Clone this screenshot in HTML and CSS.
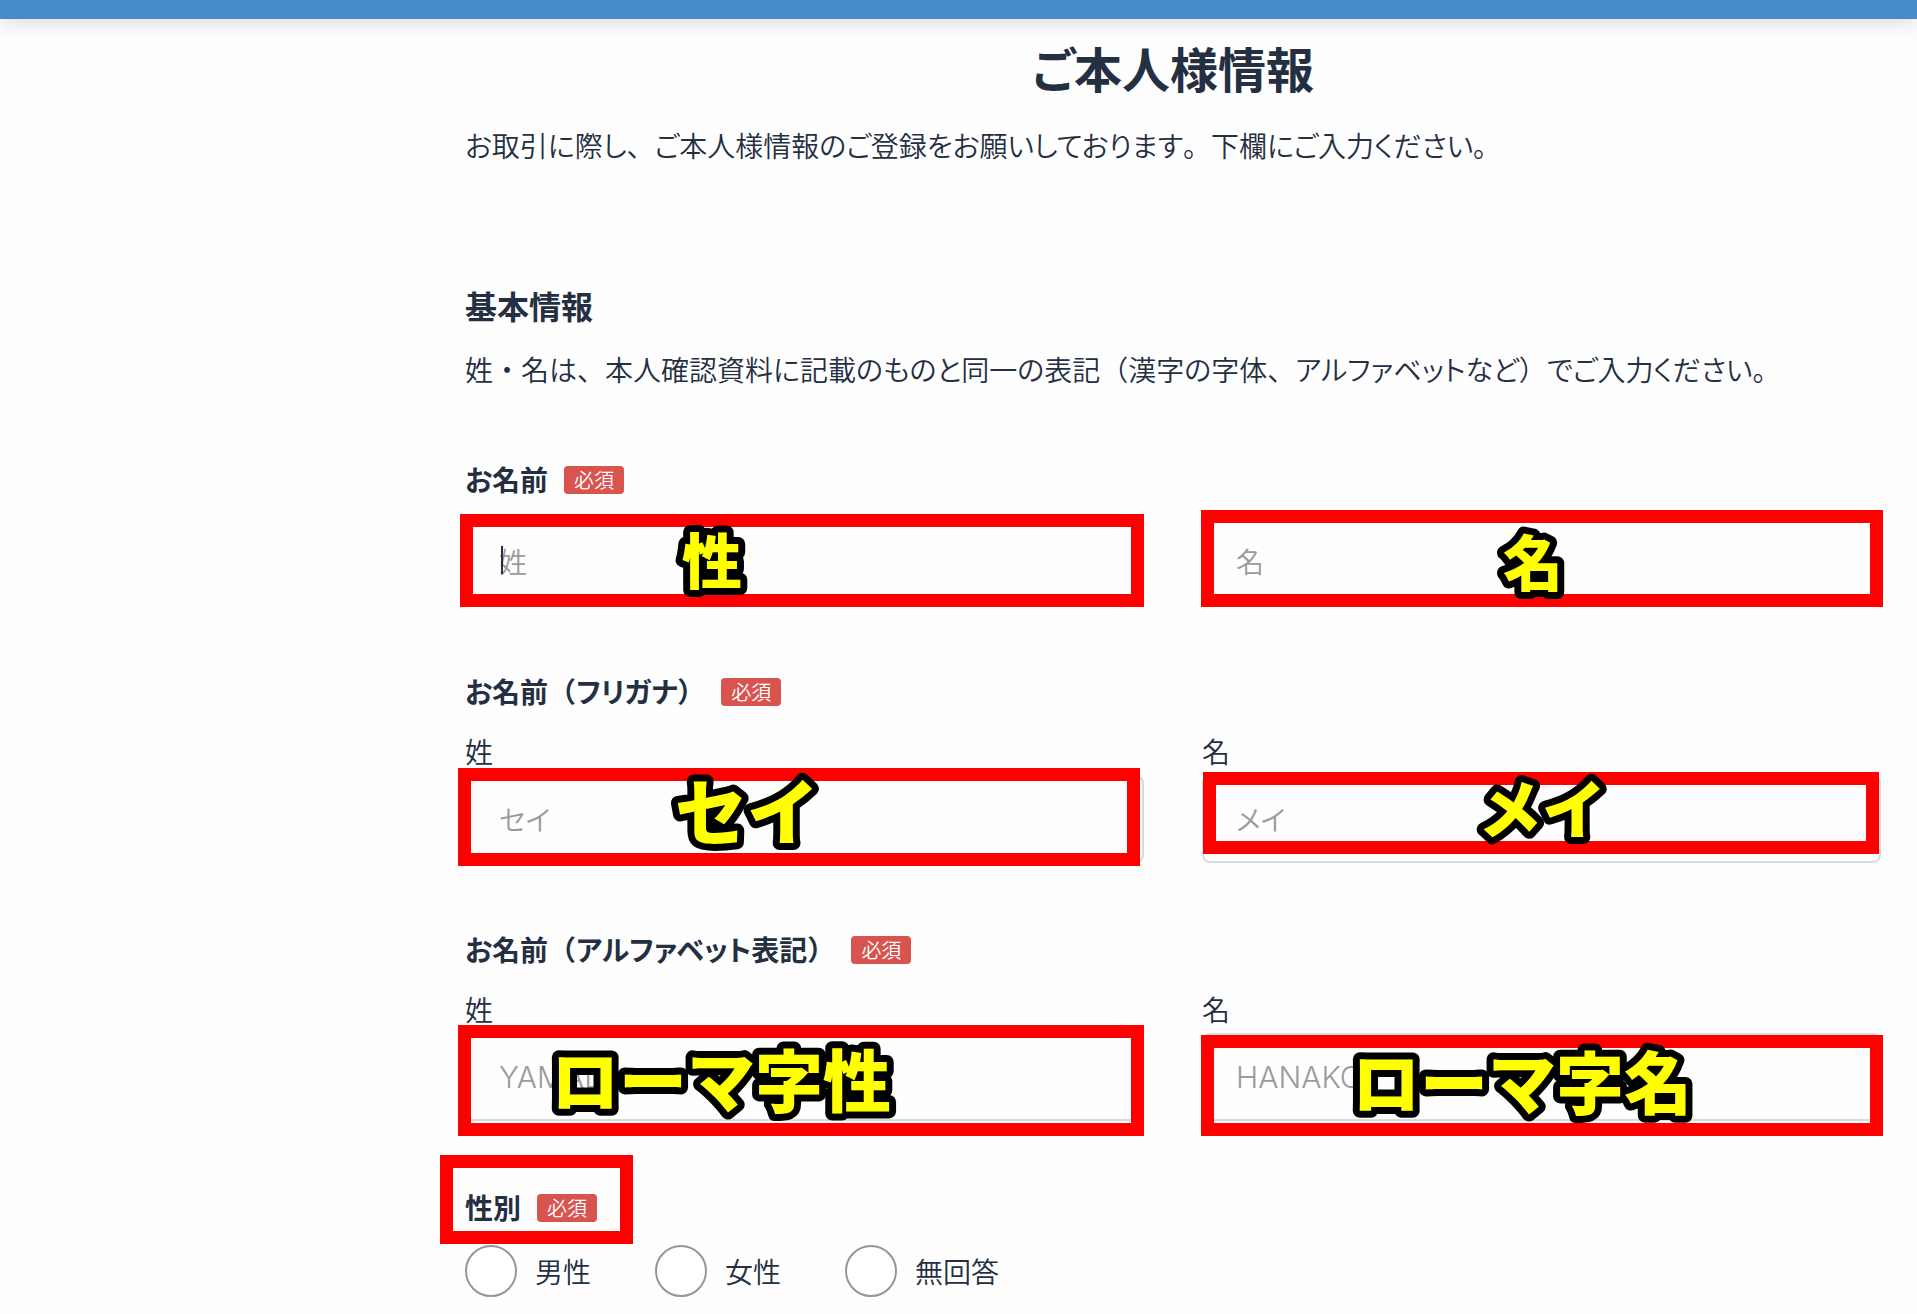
FILE: index.html
```html
<!DOCTYPE html>
<html lang="ja">

<head>
    <meta charset="UTF-8">
    <meta name="viewport" content="width=device-width, initial-scale=1.0">
    <title>ご本人様情報</title>
    <link rel="stylesheet" href="styles.css">
</head>

<body>
    <header class="topbar"></header>
    <main class="content">
        <h1>ご本人様情報</h1>
        <p class="lead">お取引に際し<span class="full">、</span>ご本人様情報のご登録をお願いしております<span class="full">。</span>下欄にご入力ください<span class="full">。</span></p>

        <h2>基本情報</h2>
        <p class="note">姓<span class="full">・</span>名は<span class="full">、</span>本人確認資料に記載のものと同一の表記<span class="full">（</span>漢字の字体<span class="full">、</span>アルファベットなど<span class="full">）</span>でご入力ください<span class="full">。</span></p>

        <form>
            <section class="group">
                <h3 class="title">お名前<span class="badge">必須</span></h3>
                <div class="row">
                    <div class="field">
                        <div class="box">
                            <input class="active" type="text" placeholder="姓" aria-label="姓">
                            <i class="caret"></i>
                            <div class="mark mark-sei"></div>
                            <svg class="memo"><text class="small" x="217" y="67">性</text></svg>
                        </div>
                    </div>
                    <div class="field">
                        <div class="box">
                            <input type="text" placeholder="名" aria-label="名">
                            <div class="mark mark-mei"></div>
                            <svg class="memo"><text class="small" x="301" y="69">名</text></svg>
                        </div>
                    </div>
                </div>
            </section>

            <section class="group">
                <h3 class="title">お名前<span class="full">（</span>フリガナ<span class="full">）</span><span class="badge">必須</span></h3>
                <div class="row">
                    <div class="field">
                        <label for="kana-sei">姓</label>
                        <div class="box">
                            <input id="kana-sei" type="text" placeholder="セイ">
                            <div class="mark mark-kana-sei"></div>
                            <svg class="memo"><text class="large" x="210" y="64">セイ</text></svg>
                        </div>
                    </div>
                    <div class="field">
                        <label for="kana-mei">名</label>
                        <div class="box">
                            <input id="kana-mei" type="text" placeholder="メイ">
                            <div class="mark mark-kana-mei"></div>
                            <svg class="memo"><text class="medium" x="276" y="58">メイ</text></svg>
                        </div>
                    </div>
                </div>
            </section>

            <section class="group">
                <h3 class="title">お名前<span class="full">（</span>アルファベット表記<span class="full">）</span><span class="badge">必須</span></h3>
                <div class="row">
                    <div class="field">
                        <label for="roma-sei">姓</label>
                        <div class="box">
                            <input id="roma-sei" class="roma" type="text" placeholder="YAMADA">
                            <div class="mark mark-roma-sei"></div>
                            <svg class="memo"><text x="86" y="74">ローマ字性</text></svg>
                        </div>
                    </div>
                    <div class="field">
                        <label for="roma-mei">名</label>
                        <div class="box">
                            <input id="roma-mei" class="roma" type="text" placeholder="HANAKO">
                            <div class="mark mark-roma-mei"></div>
                            <svg class="memo"><text x="150" y="76">ローマ字名</text></svg>
                        </div>
                    </div>
                </div>
            </section>

            <section class="group">
                <h3 class="title">性別<span class="badge">必須</span></h3>
                <div class="radios">
                    <label><input type="radio" name="gender">男性</label>
                    <label><input type="radio" name="gender">女性</label>
                    <label><input type="radio" name="gender">無回答</label>
                </div>
                <div class="mark mark-gender"></div>
            </section>
        </form>
    </main>
</body>

</html>
```
FILE: styles.css
```css
* {
    box-sizing: border-box;
    margin: 0;
    padding: 0;
}

body {
    background-color: #fefefe;
    color: #242f42;
    font-family: "Noto Sans CJK JP", sans-serif;
    font-size: 28px;
    font-weight: 350;
    line-height: 44px;
    font-feature-settings: "palt";
}

.topbar {
    height: 19px;
    background-color: #458ccb;
    box-shadow: 0 0 24px rgba(0, 0, 0, 0.2);
}

.content {
    padding: 12px 36px 16px 465px;
}

h1 {
    font-size: 48px;
    line-height: 72px;
    text-align: center;
    margin-bottom: 20px;
}

.lead {
    margin-bottom: 114px;
}

h2 {
    font-size: 32px;
    line-height: 48px;
    margin-bottom: 18px;
}

.note {
    margin-bottom: 66px;
}

/* 約物は全角のまま */
.full {
    font-feature-settings: normal;
}

.group {
    position: relative;
    margin-bottom: 64px;
}

.title {
    display: flex;
    align-items: center;
    font-size: 28px;
    margin-bottom: 16px;
}

.badge {
    margin-left: 16px;
    margin-top: 2px;
    padding: 0 10px;
    border-radius: 4px;
    background-color: #d9534f;
    color: #fff;
    font-size: 20px;
    font-weight: 350;
    line-height: 28px;
}

.row {
    display: grid;
    grid-template-columns: 1fr 1fr;
    column-gap: 58px;
}

.field label {
    display: block;
    margin-bottom: 2px;
}

.box {
    position: relative;
}

.box input {
    display: block;
    width: 100%;
    height: 88px;
    padding: 0 32px;
    border: 2px solid #d9dcdc;
    border-radius: 8px;
    background-color: #fefefe;
    color: inherit;
    font: inherit;
    font-feature-settings: inherit;
    outline: none;
}

.box input.active {
    border-color: #242f42;
}

.box input.roma {
    font-family: Inter, "Noto Sans CJK JP", sans-serif;
    font-size: 30px;
    font-weight: 300;
}

.box input::placeholder {
    color: #9b9b9b;
    opacity: 1;
}

.caret {
    position: absolute;
    left: 36px;
    top: 29px;
    width: 2px;
    height: 28px;
    background-color: #242f42;
}

.radios {
    display: flex;
    gap: 64px;
}

.radios label {
    display: flex;
    align-items: center;
    gap: 18px;
}

.radios input {
    appearance: none;
    width: 52px;
    height: 52px;
    border: 2px solid #92979f;
    border-radius: 50%;
    background-color: #fff;
}

/* 赤枠 */
.mark {
    position: absolute;
    border: 13px solid #f00;
    pointer-events: none;
}

.mark-sei {
    inset: -3px 0 -2px -5px;
}

.mark-mei {
    inset: -7px -2px -2px -1px;
}

.mark-kana-sei {
    inset: -7px 4px -3px -7px;
}

.mark-kana-mei {
    inset: -3px 2px 9px 1px;
}

.mark-roma-sei {
    inset: -8px 0 -15px -7px;
}

.mark-roma-mei {
    inset: 2px -2px -15px -1px;
}

.mark-gender {
    left: -25px;
    top: -30px;
    width: 193px;
    height: 89px;
}

/* 黄色の文字 */
.memo {
    position: absolute;
    left: 0;
    top: 0;
    width: 100%;
    height: 100%;
    overflow: visible;
    pointer-events: none;
}

.memo text {
    fill: #ff0;
    stroke: #000;
    stroke-width: 14px;
    stroke-linejoin: round;
    paint-order: stroke fill;
    font-size: 68px;
    font-weight: 900;
    font-feature-settings: normal;
}

.memo .small {
    font-size: 60px;
}

.memo .medium {
    font-size: 64px;
}

.memo .large {
    font-size: 72px;
}
```
